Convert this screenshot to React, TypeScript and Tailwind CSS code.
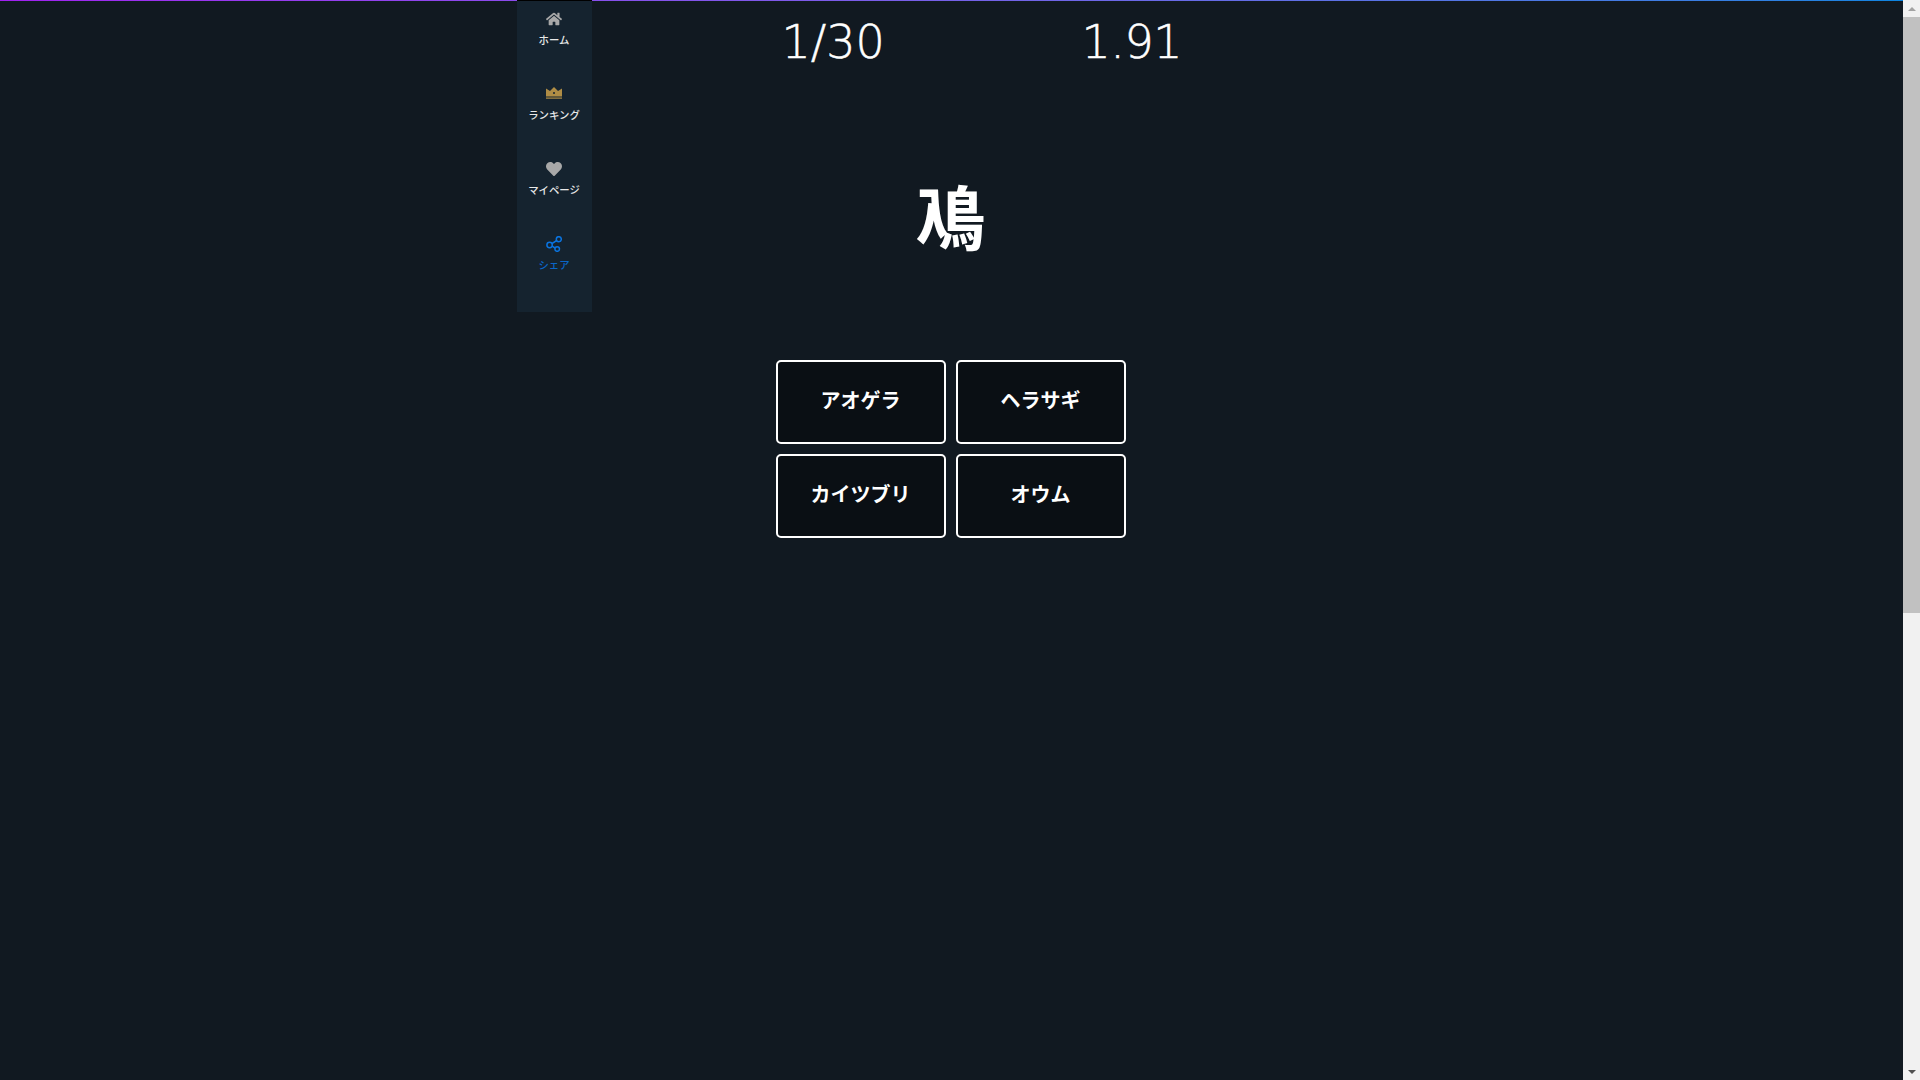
import { FaHome, FaHeart } from "react-icons/fa";

const jp = "font-['Meiryo','Noto_Sans_CJK_JP','Noto_Sans_CJK_SC',sans-serif]";

function Crown() {
  return (
    <svg width="16" height="14" viewBox="0 0 16 14" fill="#b08d45">
      <path d="M0 1.5 L4 4 L8 0 L12 4 L16 1.5 V9.5 H0 Z" />
      <rect x="0" y="10.5" width="16" height="1.2" />
      <circle cx="8" cy="6" r="1" fill="#15232f" />
    </svg>
  );
}

function Share() {
  return (
    <svg width="16" height="16" viewBox="0 0 16 16" fill="none" stroke="#0a74e0" strokeWidth="1.5">
      <circle cx="3.6" cy="9" r="2.7" />
      <circle cx="12.8" cy="3.2" r="2.5" />
      <circle cx="11.2" cy="13" r="2.3" />
      <path d="M5.9 7.6 L10.7 4.5 M6.1 10.2 L9.1 12" />
    </svg>
  );
}

function NavItem({ icon, label, color }: { icon: React.ReactNode; label: string; color: string }) {
  return (
    <div className="flex h-[75px] flex-col items-center pr-px pt-[10px]">
      <div className="flex h-[16px] items-center justify-center">{icon}</div>
      <div className={`mt-[5px] text-[10.4px] font-medium leading-[16px] ${color}`}>{label}</div>
    </div>
  );
}

function Choice({ label }: { label: string }) {
  return (
    <button className="flex h-[84px] w-[170px] items-center justify-center rounded-[5px] border-2 border-white bg-[#0a0f14] pb-1 text-[20px] font-bold text-white">
      {label}
    </button>
  );
}

export default function App() {
  return (
    <div className={`flex h-screen w-full overflow-hidden bg-[#111921] ${jp}`}>
      <div className="flex min-w-0 flex-1 flex-col">
        <div className="h-px w-full shrink-0 bg-gradient-to-r from-[#a020f0] to-[#0a84e0]" />
        <div className="flex flex-1">
          <nav className="ml-[517px] -mt-px h-[312px] w-[75px] border-t border-black bg-[#15232f]">
            <NavItem icon={<FaHome size={16} color="#a8a8a8" />} label="ホーム" color="text-[#e8e8e8]" />
            <NavItem icon={<Crown />} label="ランキング" color="text-[#e8e8e8]" />
            <NavItem icon={<FaHeart size={16} color="#a8a8a8" />} label="マイページ" color="text-[#e8e8e8]" />
            <NavItem icon={<Share />} label="シェア" color="text-[#0a66c8]" />
          </nav>
          <main className="flex w-[717px] flex-col items-center">
            <div className="mt-[13px] flex h-[56px] w-[500px] items-center font-['DejaVu_Sans',sans-serif] text-[46px] font-light leading-[56px] text-white [-webkit-text-stroke:0.5px_white]">
              <span className="ml-[81px] w-[300px]">1/30</span>
              <span className="tracking-[-0.5px]">1.91</span>
            </div>
            <div className="mt-[95px] h-[100px] text-[70px] font-bold leading-[100px] text-white">鳰</div>
            <div className="mt-[95px] grid grid-cols-[170px_170px] gap-[10px]">
              <Choice label="アオゲラ" />
              <Choice label="ヘラサギ" />
              <Choice label="カイツブリ" />
              <Choice label="オウム" />
            </div>
          </main>
        </div>
      </div>
      <div className="flex w-[17px] shrink-0 flex-col bg-[#f1f1f1]">
        <div className="flex h-[17px] items-center justify-center">
          <div className="h-0 w-0 border-x-[4px] border-b-[4px] border-x-transparent border-b-[#a3a3a3]" />
        </div>
        <div className="h-[596px] bg-[#c1c1c1]" />
        <div className="flex-1" />
        <div className="flex h-[17px] items-center justify-center">
          <div className="h-0 w-0 border-x-[4px] border-t-[4px] border-x-transparent border-t-[#505050]" />
        </div>
      </div>
    </div>
  );
}
